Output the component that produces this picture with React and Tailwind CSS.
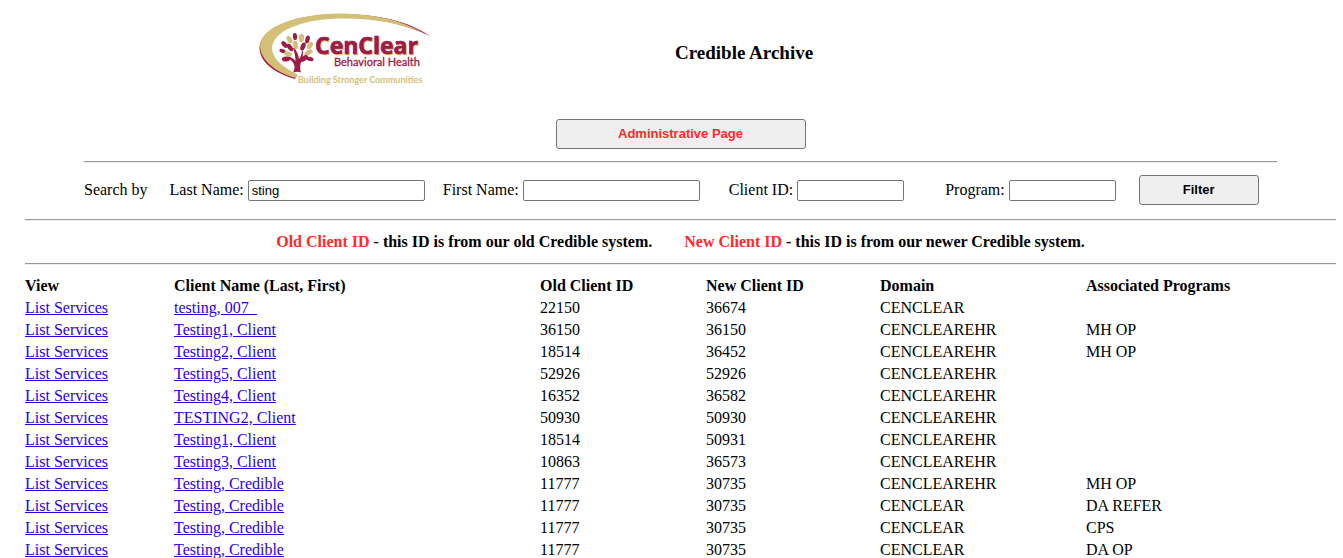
const clients = [
  ["testing, 007_", "22150", "36674", "CENCLEAR", ""],
  ["Testing1, Client", "36150", "36150", "CENCLEAREHR", "MH OP"],
  ["Testing2, Client", "18514", "36452", "CENCLEAREHR", "MH OP"],
  ["Testing5, Client", "52926", "52926", "CENCLEAREHR", ""],
  ["Testing4, Client", "16352", "36582", "CENCLEAREHR", ""],
  ["TESTING2, Client", "50930", "50930", "CENCLEAREHR", ""],
  ["Testing1, Client", "18514", "50931", "CENCLEAREHR", ""],
  ["Testing3, Client", "10863", "36573", "CENCLEAREHR", ""],
  ["Testing, Credible", "11777", "30735", "CENCLEAREHR", "MH OP"],
  ["Testing, Credible", "11777", "30735", "CENCLEAR", "DA REFER"],
  ["Testing, Credible", "11777", "30735", "CENCLEAR", "CPS"],
  ["Testing, Credible", "11777", "30735", "CENCLEAR", "DA OP"],
];

// Leaves of the tree: centre x, centre y, half length, half width, angle, colour
const RED = "#9e1b45";
const GOLD = "#d3bf76";
const leaves = [
  [45, 31.5, 3.6, 2.1, 85, RED],
  [51.5, 33, 4.2, 2.6, 95, GOLD],
  [57.5, 34.5, 4, 2.2, 105, RED],
  [39.5, 34.5, 4, 2.5, 60, GOLD],
  [34.5, 39.5, 4, 2.2, 50, RED],
  [45.5, 40, 4.2, 2.5, 75, GOLD],
  [53, 41.5, 4.2, 2.4, 110, RED],
  [40, 42.5, 4.2, 2.3, 55, RED],
  [32.500, 46, 3.2, 1.9, 20, RED],
  [38, 49, 4, 2.3, 20, GOLD],
  [36, 54, 4.2, 2.5, -8, RED],
  [60, 40.5, 4, 2.4, 125, GOLD],
  [58.500, 47.5, 4.4, 2.4, 150, GOLD],
  [54, 53.5, 4.6, 2.5, 145, RED],
  [60, 54, 3.6, 2.1, 10, RED],
];

function Logo() {
  return (
    <svg viewBox="8 8 174 76" className="h-[76px] w-[174px] shrink-0" role="img" aria-label="CenClear Behavioral Health">
      <path
        d="M180 31C158 16 128 9.500 92 9C45 9 10 23 9.500 43C10 57 24 68 45 74L47 70C31 62 21 53 21 43C22 25 50 14 88 12.500C122 11.500 156 19 180 31Z"
        fill={RED}
      />
      <path
        d="M174 28C150 15 125 9 92 8.500C46 8.500 10.500 22 10 41C10.500 55 25 67 45.500 73L47 69.500C32 62 22 53 22 43C23 26 50 15 88 13.500C120 12.500 150 18 174 28Z"
        fill={GOLD}
      />
      <path
        d="M43 67.500C46 62 45 58 38 53L39 51.500C42 53 44 54 45.500 56C45.500 51 44.500 47 43 43L44.500 43C47 47 48.500 50 49 54C50.500 52 51.500 50 52 46L53 46C53 52 52 56 50.500 59C50 62 50 65 51 67.500C49 66.500 46 66.500 43 67.500Z"
        fill={RED}
      />
      {leaves.map(([x, y, rx, ry, angle, fill]) => (
        <ellipse key={`${x}-${y}`} cx={x} cy={y} rx={rx} ry={ry} fill={fill} transform={`rotate(${angle} ${x} ${y})`} />
      ))}
      <text
        x="65"
        y="49"
        fontSize="23"
        fontWeight="700"
        fill={RED}
        stroke={RED}
        strokeWidth="0.7"
        className="font-['Open_Sans',sans-serif] [filter:drop-shadow(1px_1px_0_#d3bf76)]"
      >
        CenClear
      </text>
      <g className="font-['Lato',sans-serif]">
        <text x="84" y="61" fontSize="11" fontWeight="400" fill={RED} stroke={RED} strokeWidth="0.3">Behavioral Health</text>
        <text x="48" y="78" fontSize="9" fontWeight="700" fill={GOLD}>Building Stronger Communities</text>
      </g>
    </svg>
  );
}

function Rule() {
  return <hr className="h-[2px] border-0 border-t border-[#9a9a9a] bg-[#eeeeee]" />;
}

function Field({ id, label, wide, defaultValue }) {
  return (
    <div className="flex items-center gap-1">
      <label htmlFor={id} className="whitespace-nowrap">{label}</label>
      <input
        id={id}
        type="text"
        defaultValue={defaultValue}
        className={`${wide ? "w-[177px]" : "w-[107px]"} h-[21px] rounded-xs border border-[#767676] bg-white px-[3px] font-['Liberation_Sans',sans-serif] text-[13px]`}
      />
    </div>
  );
}

const buttonClass =
  "h-[30px] rounded-[3px] border border-[#767676] bg-[#efefef] font-['Liberation_Sans',sans-serif] text-[13px] font-bold";
const linkClass = "text-[#2a00e6] underline";

export default function App() {
  return (
    <main className="bg-white pr-[7px] pl-[25px] font-['Liberation_Serif',serif] text-base leading-5 text-black">
      <header className="flex items-center gap-[243px] pt-[13px] pl-[233px]">
        <Logo />
        <h1 className="pt-1 text-[19px] font-bold">Credible Archive</h1>
      </header>

      <section className="mx-[59px] mt-[30px]">
        <div className="mb-3 flex justify-center">
          <button type="button" className={`${buttonClass} w-[250px] text-[#ff2a2a]`}>Administrative Page</button>
        </div>
        <Rule />
        <form className="flex items-center py-3" onSubmit={(e) => e.preventDefault()}>
          <span className="mr-[22px] whitespace-nowrap">Search by</span>
          <Field id="last" label="Last Name:" wide defaultValue="sting" />
          <div className="ml-[18px]"><Field id="first" label="First Name:" wide /></div>
          <div className="ml-[29px]"><Field id="client" label="Client ID:" /></div>
          <div className="ml-[41px]"><Field id="program" label="Program:" /></div>
          <button type="submit" className={`${buttonClass} ml-[23px] w-[120px]`}>Filter</button>
        </form>
      </section>

      <div className="mt-[2px]"><Rule /></div>
      <div className="flex h-[42px] items-center justify-center gap-8 font-bold">
        <p><span className="text-[#ff2a2a]">Old Client ID</span> - this ID is from our old Credible system.</p>
        <p><span className="text-[#ff2a2a]">New Client ID</span> - this ID is from our newer Credible system.</p>
      </div>
      <Rule />

      <table className="mt-[10px] w-full table-fixed text-left">
        <colgroup>
          <col className="w-[149px]" />
          <col className="w-[366px]" />
          <col className="w-[166px]" />
          <col className="w-[174px]" />
          <col className="w-[206px]" />
          <col />
        </colgroup>
        <thead>
          <tr className="h-[22px]">
            <th>View</th>
            <th>Client Name (Last, First)</th>
            <th>Old Client ID</th>
            <th>New Client ID</th>
            <th>Domain</th>
            <th>Associated Programs</th>
          </tr>
        </thead>
        <tbody>
          {clients.map(([name, oldId, newId, domain, programs], i) => (
            <tr key={i} className="h-[22px]">
              <td><a href="#services" className={linkClass}>List Services</a></td>
              <td><a href="#client" className={linkClass}>{name}</a></td>
              <td>{oldId}</td>
              <td>{newId}</td>
              <td>{domain}</td>
              <td>{programs}</td>
            </tr>
          ))}
        </tbody>
      </table>
    </main>
  );
}
